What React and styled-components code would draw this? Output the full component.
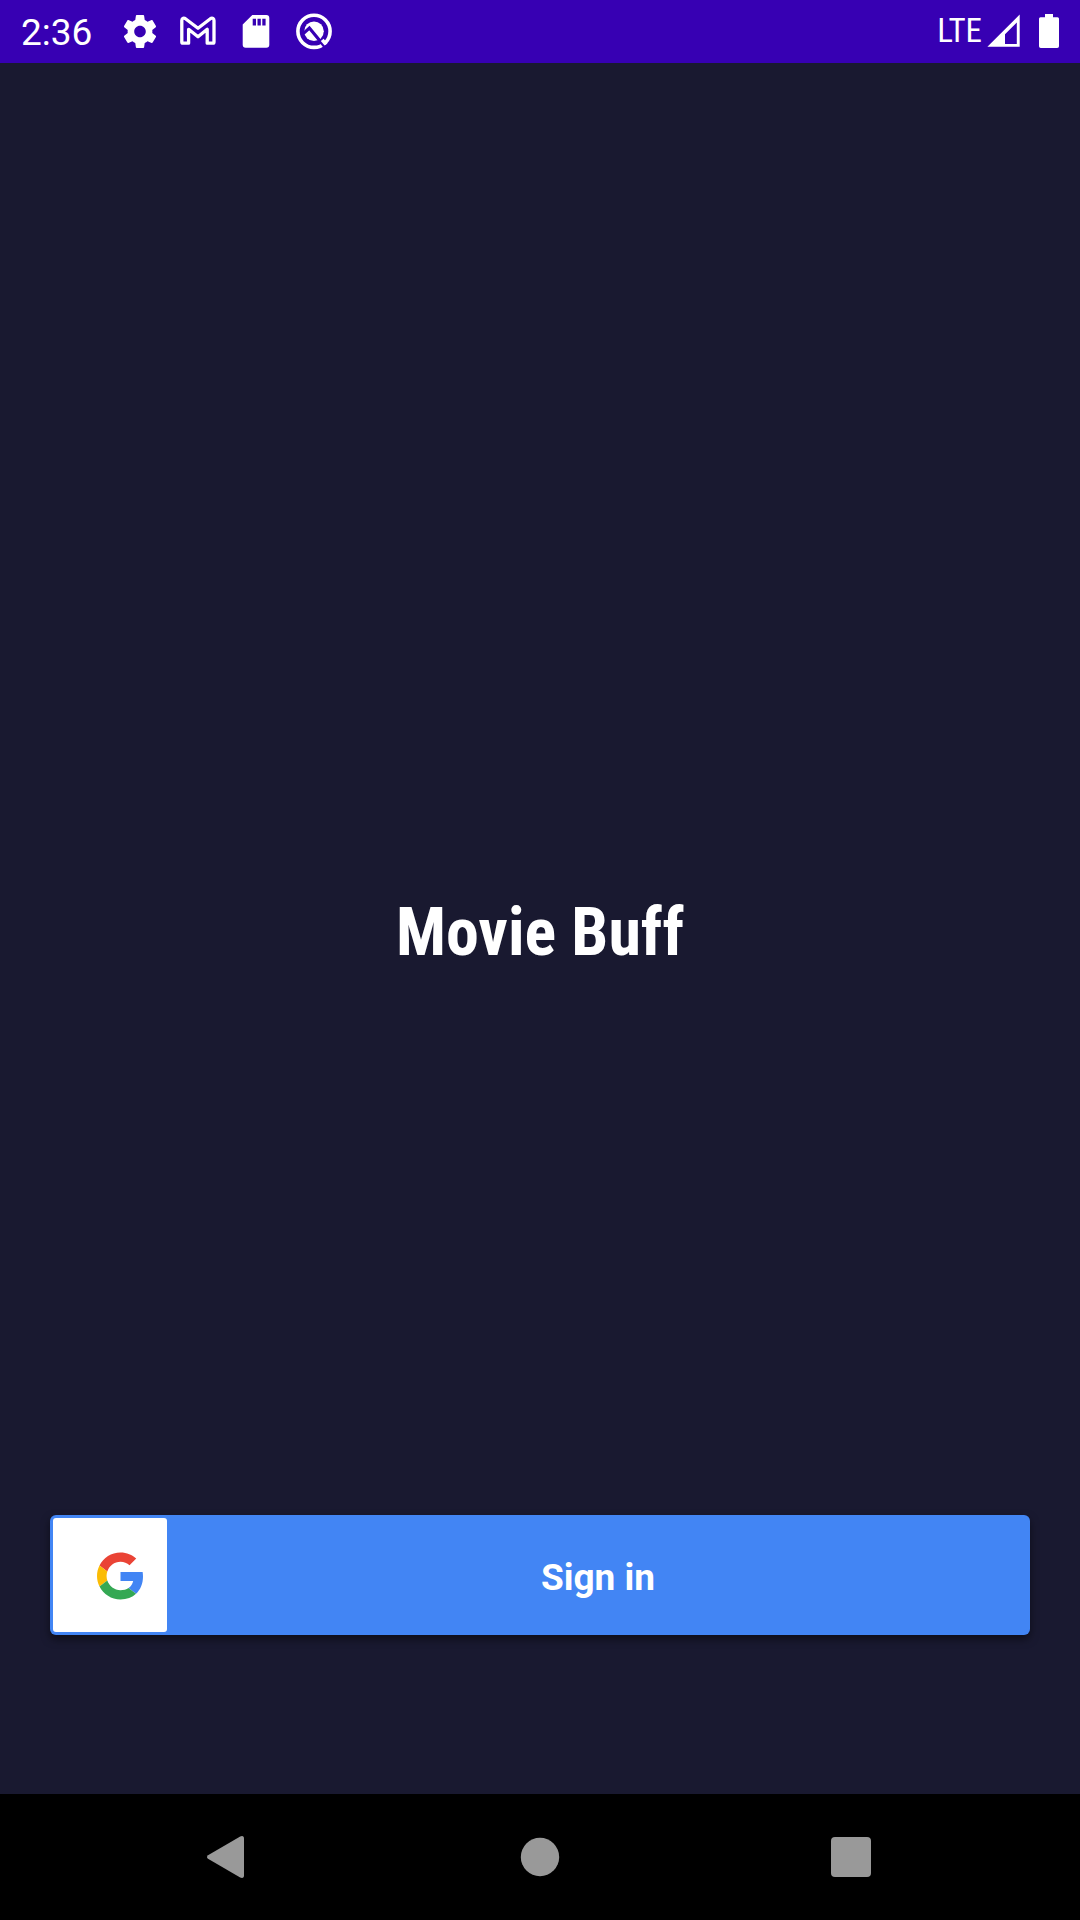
import React from "react";
import styled, { createGlobalStyle } from "styled-components";

const GlobalStyle = createGlobalStyle`
  *, *::before, *::after { box-sizing: border-box; }
  body {
    margin: 0;
    background: #191930;
    color: #ffffff;
    font-family: Roboto, "Liberation Sans", sans-serif;
  }
`;

const Screen = styled.div`
  display: flex;
  flex-direction: column;
  min-height: 100vh;
`;

const StatusBar = styled.header`
  display: flex;
  align-items: center;
  justify-content: space-between;
  height: 63px;
  padding: 0 21px;
  background: #3700b3;
`;

const StatusGroup = styled.div`
  display: flex;
  align-items: center;
  gap: ${(p) => p.$gap}px;
`;

const Clock = styled.time`
  margin-right: 11px;
  padding-top: 2px;
  font-size: 37px;
  line-height: 40px;
`;

const Network = styled.span`
  font-family: "Roboto Condensed", Roboto, "Liberation Sans", sans-serif;
  font-size: 33px;
  line-height: 40px;
  padding-bottom: 2px;
`;

const Glyph = styled.svg`
  display: block;
  flex: none;
  width: ${(p) => p.$w}px;
  height: ${(p) => p.$h || p.$w}px;
`;

const Main = styled.main`
  flex: 1;
  display: grid;
  grid-template-rows: 1fr auto 1fr;
  padding: 0 50px;
`;

const Title = styled.h1`
  grid-row: 2;
  margin: 0;
  padding-top: 8px;
  text-align: center;
  font-family: "Roboto Condensed", Roboto, "Liberation Sans", sans-serif;
  font-size: 66px;
  font-weight: 700;
  line-height: 80px;
`;

const Actions = styled.div`
  grid-row: 3;
  display: flex;
  align-items: flex-end;
  padding-bottom: 159px;
`;

const SignInButton = styled.button`
  flex: 1;
  display: flex;
  align-items: center;
  height: 120px;
  padding: 3px;
  border: 0;
  border-radius: 6px;
  background: #4285f4;
  box-shadow: 0 4px 8px rgba(0, 0, 0, 0.5);
  color: #ffffff;
  font: inherit;
  cursor: pointer;
`;

const LogoTile = styled.span`
  display: flex;
  align-items: center;
  justify-content: flex-end;
  width: 114px;
  height: 114px;
  padding: 2px 23px 0 0;
  border-radius: 3px;
  background: #ffffff;
`;

const ButtonLabel = styled.span`
  flex: 1;
  padding: 6px 0 0 2px;
  font-size: 37px;
  font-weight: 700;
  line-height: 44px;
  text-align: center;
`;

const NavBar = styled.nav`
  display: grid;
  grid-template-columns: repeat(3, 1fr);
  height: 126px;
  padding: 0 72px;
  background: #000000;
`;

const NavButton = styled.button`
  display: flex;
  align-items: center;
  justify-content: center;
  padding: 0;
  border: 0;
  background: none;
  color: #999999;
  cursor: pointer;
`;

function SettingsIcon() {
  return (
    <Glyph $w={41} viewBox="0 0 41 41" fill="#fff" aria-hidden="true">
      <path
        transform="translate(.2 .7) scale(1.65)"
        d="M19.43 12.98c.04-.32.07-.64.07-.98s-.03-.66-.07-.98l2.11-1.65c.19-.15.24-.42.12-.64l-2-3.46c-.12-.22-.39-.3-.61-.22l-2.49 1c-.52-.4-1.08-.73-1.69-.98l-.38-2.65C14.46 2.18 14.25 2 14 2h-4c-.25 0-.46.18-.49.42l-.38 2.65c-.61.25-1.17.59-1.69.98l-2.49-1c-.23-.09-.49 0-.61.22l-2 3.46c-.13.22-.07.49.12.64l2.11 1.65c-.04.32-.07.65-.07.98s.03.66.07.98l-2.11 1.65c-.19.15-.24.42-.12.64l2 3.46c.12.22.39.3.61.22l2.49-1c.52.4 1.08.73 1.69.98l.38 2.65c.03.24.24.42.49.42h4c.25 0 .46-.18.49-.42l.38-2.65c.61-.25 1.17-.59 1.69-.98l2.49 1c.23.09.49 0 .61-.22l2-3.46c.12-.22.07-.49-.12-.64l-2.11-1.65zM12 15.5c-1.93 0-3.5-1.57-3.5-3.5s1.57-3.5 3.5-3.5 3.5 1.57 3.5 3.5-1.57 3.5-3.5 3.5z"
      />
    </Glyph>
  );
}

function MailIcon() {
  return (
    <Glyph $w={41} viewBox="0 0 41 41" fill="none" aria-hidden="true">
      <path
        d="M3.8 9.5V31q0 1.2 1.2 1.2H10.6V18.3L20 25.8L29.2 18.3V32.2H34.8q1.2 0 1.2-1.2V9.5Q35.8 6.6 33 7.3L20 17.3L6.8 7.3Q4 6.6 3.8 9.5Z"
        stroke="#fff"
        strokeWidth="3.3"
        strokeLinejoin="round"
      />
    </Glyph>
  );
}

function StorageIcon() {
  return (
    <Glyph $w={41} viewBox="0 0 41 41" aria-hidden="true">
      <path
        fill="#fff"
        fillRule="evenodd"
        d="M16.3 4H30.3a3 3 0 0 1 3 3V33.7a3 3 0 0 1-3 3H9.7a3 3 0 0 1-3-3V13.6ZM16.7 7.7V14.4H20V7.7ZM21.5 7.7V14.4H24.8V7.7ZM26.3 7.7V14.4H29.6V7.7Z"
      />
    </Glyph>
  );
}

function SystemIcon() {
  return (
    <Glyph $w={41} viewBox="0 0 41 41" fill="none" aria-hidden="true">
      <circle cx="20" cy="20.3" r="16.1" stroke="#fff" strokeWidth="3.6" />
      <circle cx="20" cy="20.3" r="9.8" fill="#fff" />
      <path d="M9.5 22.4L15.4 17L31 36" stroke="#3700b3" strokeWidth="3.2" />
      <path d="M28.2 28.8L32 33.4" stroke="#fff" strokeWidth="3.6" />
    </Glyph>
  );
}

function SignalIcon() {
  return (
    <Glyph $w={33} $h={41} viewBox="0 0 33 41" aria-hidden="true">
      <path
        fill="#fff"
        fillRule="evenodd"
        d="M32.7 3.5V35.8H.4ZM29.8 11.5L18 23.3V33H29.8Z"
      />
    </Glyph>
  );
}

function BatteryIcon() {
  return (
    <Glyph $w={20} $h={41} viewBox="0 0 20 41" aria-hidden="true">
      <path
        fill="#fff"
        d="M6 3H14V6.3H18.5A1.5 1.5 0 0 1 20 7.8V35.2A1.8 1.8 0 0 1 18.2 37H1.8A1.8 1.8 0 0 1 0 35.2V7.8A1.5 1.5 0 0 1 1.5 6.3H6Z"
      />
    </Glyph>
  );
}

function GoogleLogo() {
  return (
    <Glyph $w={47} $h={48} viewBox="0 0 48 48" aria-hidden="true">
      <path
        fill="#EA4335"
        d="M24 9.5c3.54 0 6.71 1.22 9.21 3.6l6.85-6.85C35.9 2.38 30.47 0 24 0 14.62 0 6.51 5.38 2.56 13.22l7.98 6.19C12.43 13.72 17.74 9.5 24 9.5z"
      />
      <path
        fill="#4285F4"
        d="M46.98 24.55c0-1.57-.15-3.09-.38-4.55H24v9.02h12.94c-.58 2.96-2.26 5.48-4.78 7.18l7.73 6c4.51-4.18 7.09-10.36 7.09-17.65z"
      />
      <path
        fill="#FBBC05"
        d="M10.53 28.59c-.48-1.45-.76-2.99-.76-4.59s.27-3.14.76-4.59l-7.98-6.19C.92 16.46 0 20.12 0 24c0 3.88.92 7.54 2.56 10.78l7.97-6.19z"
      />
      <path
        fill="#34A853"
        d="M24 48c6.48 0 11.93-2.13 15.89-5.81l-7.73-6c-2.15 1.45-4.92 2.3-8.16 2.3-6.26 0-11.57-4.22-13.47-9.91l-7.98 6.19C6.51 42.62 14.62 48 24 48z"
      />
    </Glyph>
  );
}

export default function App() {
  return (
    <Screen>
      <GlobalStyle />
      <StatusBar>
        <StatusGroup $gap={17}>
          <Clock>2:36</Clock>
          <SettingsIcon />
          <MailIcon />
          <StorageIcon />
          <SystemIcon />
        </StatusGroup>
        <StatusGroup $gap={19}>
          <StatusGroup $gap={5}>
            <Network>LTE</Network>
            <SignalIcon />
          </StatusGroup>
          <BatteryIcon />
        </StatusGroup>
      </StatusBar>
      <Main>
        <Title>Movie Buff</Title>
        <Actions>
          <SignInButton type="button">
            <LogoTile>
              <GoogleLogo />
            </LogoTile>
            <ButtonLabel>Sign in</ButtonLabel>
          </SignInButton>
        </Actions>
      </Main>
      <NavBar>
        <NavButton type="button" aria-label="Back">
          <Glyph $w={48} viewBox="0 0 48 48" fill="currentColor" aria-hidden="true">
            <path d="M4 22.2L36.2 3.4Q40 2 40 5.8V42.2Q40 46 36.2 44.6L4 25.8Q2 24 4 22.2Z" />
          </Glyph>
        </NavButton>
        <NavButton type="button" aria-label="Home">
          <Glyph $w={48} viewBox="0 0 48 48" fill="currentColor" aria-hidden="true">
            <circle cx="24" cy="24" r="19.2" />
          </Glyph>
        </NavButton>
        <NavButton type="button" aria-label="Recent apps">
          <Glyph $w={48} viewBox="0 0 48 48" fill="currentColor" aria-hidden="true">
            <rect x="3" y="4" width="40" height="40" rx="4" />
          </Glyph>
        </NavButton>
      </NavBar>
    </Screen>
  );
}
